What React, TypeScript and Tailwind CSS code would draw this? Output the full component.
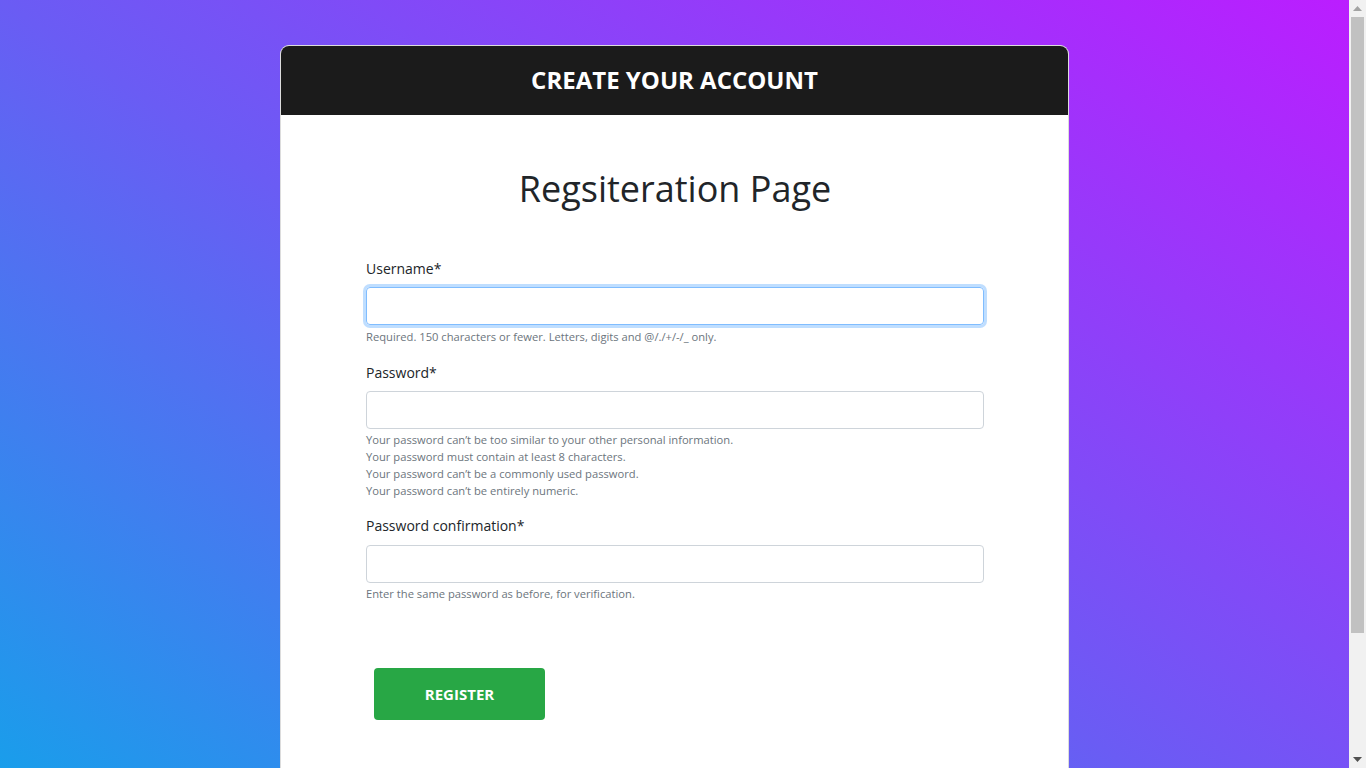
import React from "react";

const help = "text-[11.2px] leading-[17px] text-[#6c757d]";
const label = "block text-[14px] text-[#212529] leading-[21px]";

function Scrollbar() {
  return (
    <div className="w-[17px] h-full bg-[#f1f1f1] flex flex-col items-center shrink-0">
      <div className="h-[17px] flex items-center justify-center">
        <svg width="9" height="5" viewBox="0 0 9 5"><path d="M0 5 L4.5 0 L9 5 Z" fill="#a3a3a3" /></svg>
      </div>
      <div className="w-[13px] h-[616px] bg-[#c1c1c1]" />
      <div className="flex-1" />
      <div className="h-[17px] flex items-center justify-center">
        <svg width="9" height="5" viewBox="0 0 9 5"><path d="M0 0 L9 0 L4.5 5 Z" fill="#505050" /></svg>
      </div>
    </div>
  );
}

export default function App() {
  return (
    <div className="flex w-full h-[768px] overflow-hidden" style={{ fontFamily: '"Open Sans", "Noto Sans", sans-serif' }}>
      <div className="flex-1 h-full overflow-hidden">
        <div className="min-h-[915px] w-full bg-[linear-gradient(to_top_right,#0aaae9,#6a5cf4_50%,#bb1dff)] pt-[45px]">
          <div className="mx-auto w-[789px] h-[870px] bg-white border border-[#dcdcdc] border-b-0 rounded-t-[9px] overflow-hidden">
            <div className="h-[69px] bg-[#1b1b1b] flex items-center justify-center">
              <h1 className="text-white font-bold text-[24px] -mt-[1px]">CREATE YOUR ACCOUNT</h1>
            </div>
            <div className="pt-[52px] pl-[85px] pr-[84px]">
              <h2 className="text-center text-[36px] text-[#212529] leading-[44px]">Regsiteration Page</h2>
              <form className="mt-[47px]" onSubmit={(e) => e.preventDefault()}>
                <label className={label}>Username*</label>
                <input
                  autoFocus
                  className="mt-[8px] block w-full h-[38px] rounded-[4px] border border-[#80bdff] shadow-[0_0_0_3px_rgba(0,123,255,0.25)] outline-none px-3"
                />
                <p className={`mt-[3px] ${help}`}>Required. 150 characters or fewer. Letters, digits and @/./+/-/_ only.</p>

                <label className={`mt-[17px] ${label}`}>Password*</label>
                <input
                  type="password"
                  className="mt-[8px] block w-full h-[38px] rounded-[4px] border border-[#ced4da] outline-none px-3"
                />
                <div className={`mt-[2px] ${help}`}>
                  <p>Your password can’t be too similar to your other personal information.</p>
                  <p>Your password must contain at least 8 characters.</p>
                  <p>Your password can’t be a commonly used password.</p>
                  <p>Your password can’t be entirely numeric.</p>
                </div>

                <label className={`mt-[16px] ${label}`}>Password confirmation*</label>
                <input
                  type="password"
                  className="mt-[9px] block w-full h-[38px] rounded-[4px] border border-[#ced4da] outline-none px-3"
                />
                <p className={`mt-[2px] ${help}`}>Enter the same password as before, for verification.</p>

                <button
                  type="submit"
                  className="mt-[66px] ml-[8px] w-[171px] h-[52px] rounded-[4px] bg-[#28a745] text-white font-bold text-[15px]"
                >
                  REGISTER
                </button>
              </form>
            </div>
          </div>
        </div>
      </div>
      <Scrollbar />
    </div>
  );
}
